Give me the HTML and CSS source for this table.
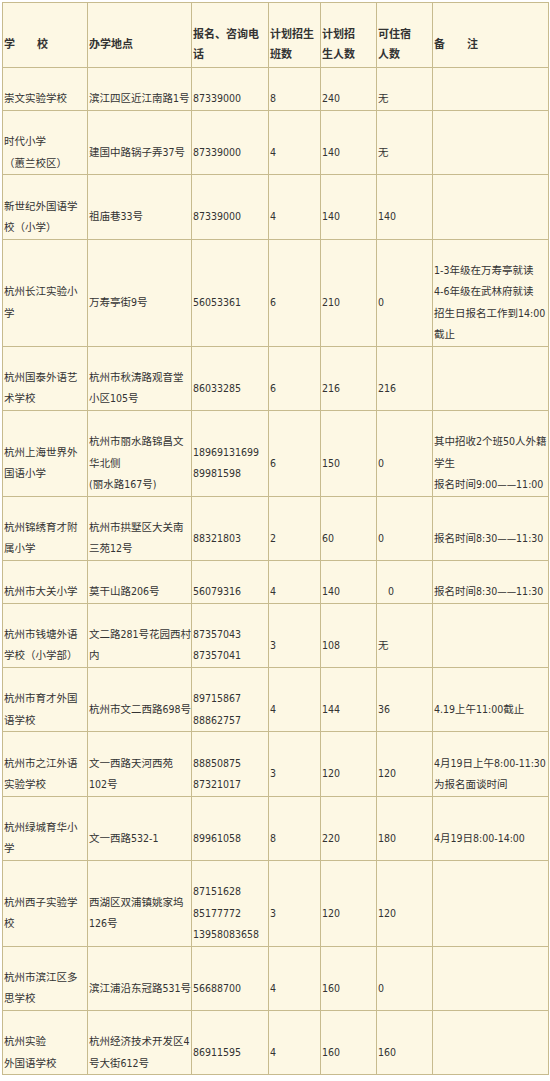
FILE: index.html
```html
<!DOCTYPE html>
<html lang="zh-CN">
<head>
<meta charset="utf-8">
<title>杭州民办小学招生</title>
<link rel="stylesheet" href="styles.css">
</head>
<body>
<table class="sched">
  <colgroup>
    <col class="c-school"><col class="c-addr"><col class="c-tel"><col class="c-cls"><col class="c-num"><col class="c-dorm"><col class="c-note">
  </colgroup>
  <thead>
    <tr>
      <th>学　　校</th>
      <th>办学地点</th>
      <th>报名、咨询电<br>话</th>
      <th>计划招生<br>班数</th>
      <th>计划招<br>生人数</th>
      <th>可住宿<br>人数</th>
      <th>备　　注</th>
    </tr>
  </thead>
  <tbody>
    <tr><td>崇文实验学校</td><td>滨江四区近江南路1号</td><td>87339000</td><td>8</td><td>240</td><td>无</td><td></td></tr>
    <tr><td>时代小学<br>（蕙兰校区）</td><td>建国中路锅子弄37号</td><td>87339000</td><td>4</td><td>140</td><td>无</td><td></td></tr>
    <tr><td>新世纪外国语学<br>校（小学）</td><td>祖庙巷33号</td><td>87339000</td><td>4</td><td>140</td><td>140</td><td></td></tr>
    <tr><td>杭州长江实验小<br>学</td><td>万寿亭街9号</td><td>56053361</td><td>6</td><td>210</td><td>0</td><td>1-3年级在万寿亭就读<br>4-6年级在武林府就读<br>招生日报名工作到14:00<br>截止</td></tr>
    <tr><td>杭州国泰外语艺<br>术学校</td><td>杭州市秋涛路观音堂<br>小区105号</td><td>86033285</td><td>6</td><td>216</td><td>216</td><td></td></tr>
    <tr><td>杭州上海世界外<br>国语小学</td><td>杭州市丽水路锦昌文<br>华北侧<br>(丽水路167号)</td><td>18969131699<br>89981598</td><td>6</td><td>150</td><td>0</td><td>其中招收2个班50人外籍<br>学生<br>报名时间9:00——11:00</td></tr>
    <tr><td>杭州锦绣育才附<br>属小学</td><td>杭州市拱墅区大关南<br>三苑12号</td><td>88321803</td><td>2</td><td>60</td><td>0</td><td>报名时间8:30——11:30</td></tr>
    <tr><td>杭州市大关小学</td><td>莫干山路206号</td><td>56079316</td><td>4</td><td>140</td><td class="indent">0</td><td>报名时间8:30——11:30</td></tr>
    <tr><td>杭州市钱塘外语<br>学校（小学部）</td><td>文二路281号花园西村<br>内</td><td>87357043<br>87357041</td><td>3</td><td>108</td><td>无</td><td></td></tr>
    <tr><td>杭州市育才外国<br>语学校</td><td>杭州市文二西路698号</td><td>89715867<br>88862757</td><td>4</td><td>144</td><td>36</td><td>4.19上午11:00截止</td></tr>
    <tr><td>杭州市之江外语<br>实验学校</td><td>文一西路天河西苑<br>102号</td><td>88850875<br>87321017</td><td>3</td><td>120</td><td>120</td><td>4月19日上午8:00-11:30<br>为报名面谈时间</td></tr>
    <tr><td>杭州绿城育华小<br>学</td><td>文一西路532-1</td><td>89961058</td><td>8</td><td>220</td><td>180</td><td>4月19日8:00-14:00</td></tr>
    <tr><td>杭州西子实验学<br>校</td><td>西湖区双浦镇姚家坞<br>126号</td><td>87151628<br>85177772<br>13958083658</td><td>3</td><td>120</td><td>120</td><td></td></tr>
    <tr><td>杭州市滨江区多<br>思学校</td><td>滨江浦沿东冠路531号</td><td>56688700</td><td>4</td><td>160</td><td>0</td><td></td></tr>
    <tr><td>杭州实验<br>外国语学校</td><td>杭州经济技术开发区4<br>号大街612号</td><td>86911595</td><td>4</td><td>160</td><td>160</td><td></td></tr>
  </tbody>
</table>
</body>
</html>
```

FILE: styles.css
```css
html, body {
  margin: 0;
  padding: 0;
  background: #ffffff;
}

body {
  padding: 2px 2px 0 2px;
}

.sched {
  width: 546px;
  table-layout: fixed;
  border-collapse: collapse;
  background: #fdf8e4;
  border: 1px solid #c2b687;
  font-family: "DejaVu Sans Condensed", "Noto Sans CJK SC", sans-serif;
  font-size: 10.5px;
  line-height: 21.33px;
  color: #333333;
}

.c-school { width: 85px; }
.c-addr { width: 104px; }
.c-tel { width: 77px; }
.c-cls { width: 52px; }
.c-num { width: 56px; }
.c-dorm { width: 56px; }
.c-note { width: 116px; }

.sched th,
.sched td {
  border: 1px solid #c7bb8e;
  padding: 20.33px 0 0.33px 1px;
  vertical-align: middle;
  text-align: left;
  white-space: nowrap;
  overflow: visible;
}

.sched th {
  font-weight: bold;
  font-size: 11px;
  line-height: 20px;
  color: #333333;
  padding-top: 22px;
  padding-bottom: 2px;
}

.sched td.indent {
  padding-left: 11px;
}
```
